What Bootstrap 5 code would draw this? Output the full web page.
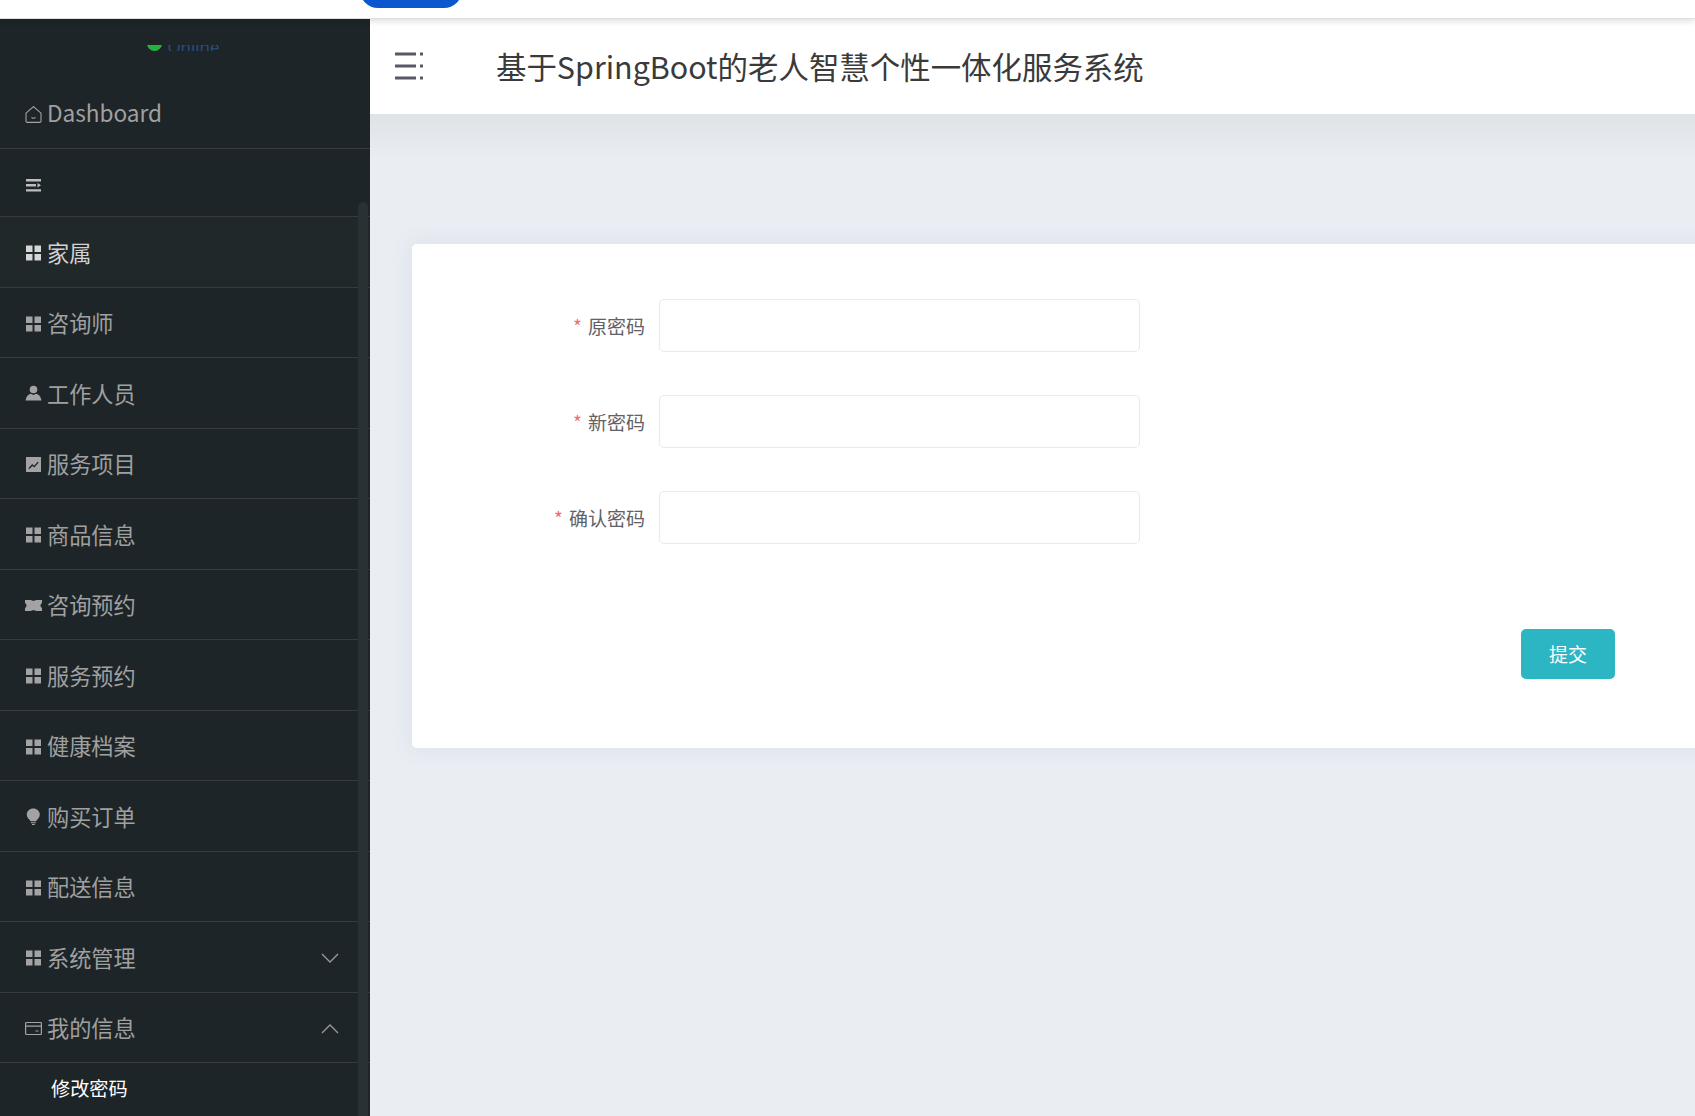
<!DOCTYPE html>
<html lang="zh-CN">
<head>
    <meta charset="UTF-8">
    <meta name="viewport" content="width=device-width, initial-scale=1.0">
    <title>修改密码</title>
    <link href="https://cdn.jsdelivr.net/npm/bootstrap@5.3.0/dist/css/bootstrap.min.css" rel="stylesheet">
    <style>
        html, body { height: 100%; }
        body { overflow: hidden; background: #eaedf2; font-family: "Noto Sans CJK SC", "Noto Sans", sans-serif; }
        .top-strip { height: 19px; background: #fff; border-bottom: 1px solid #e0e0e0; box-shadow: 0 2px 6px rgba(0,0,0,.14); position: relative; z-index: 5; flex: none; overflow: hidden; }
        .save-pill { width: 102px; height: 36px; margin: -28px 0 0 360px; background: #0b57d0; border-radius: 18px; }
        .side-panel { width: 370px; flex: none; background: #1d2528; position: relative; overflow: hidden; }
        .online-clip { height: 6px; margin: 26px 0 0; overflow: hidden; display: flex; align-items: flex-end; justify-content: center; padding-right: 3px; }
        .online-tag { display: flex; align-items: flex-end; gap: 5px; color: #27507f; font-size: 17px; line-height: 17px; font-family: "Open Sans", sans-serif; }
        .online-tag b { font-weight: 400; margin-bottom: -4px; }
        .online-dot { width: 15px; height: 15px; border-radius: 50%; background: #25b33c; display: block; }
        .side-menu .nav-link { display: flex; align-items: center; height: 70.5px; padding: 0 31px 0 25px; border-bottom: 1px solid #363b3d; color: #a0a0a0; font-size: 22.2px; line-height: 1; }
        .side-menu .row-dash { height: 98px; padding-top: 27px; font-size: 22.6px; }
        .side-menu .row-toggle { height: 68px; padding-top: 4px; }
        .side-menu .row-toggle .menu-glyph { color: #bdbdbd; }
        .side-menu .row-current { height: 70.5px; background: #20282a; color: #d2d2d2; }
        .side-menu .row-current .menu-glyph { color: #d6d6d6; }
        .menu-glyph { width: 17px; height: 17px; flex: none; margin: 2px 5px 0 0; color: #a3a3a3; }
        .menu-arrow { width: 18px; height: 18px; margin: 3px 0 0 auto; color: #9a9a9a; }
        .sub-link { display: block; padding: 12px 0 0 51px; color: #fff; font-size: 19.2px; line-height: 27px; }
        .side-track { position: absolute; top: 183px; bottom: 0; left: 358px; width: 10px; border-radius: 5px 5px 0 0; background: #2a3134; }
        .page-head { height: 95px; flex: none; padding: 0 0 3px 24px; background: #fff; position: relative; z-index: 2; }
        .head-glyph { width: 30px; height: 30px; margin-right: 72px; color: #5a5767; }
        .page-title { margin: 2px 0 0; color: #3a3a3a; font-size: 30.45px; font-weight: 400; line-height: 1; }
        .page-body { overflow: hidden; padding: 130px 0 0 42px; background: linear-gradient(#dfe2e7, #eaedf2 46px); }
        .pwd-card { width: 1320px; height: 504px; padding: 55px 117px 0 0; background: #fff; border-radius: 5px; box-shadow: 0 0 22px rgba(130,140,210,.14); }
        .pwd-row { height: 53px; margin-bottom: 43px; }
        .pwd-label { width: 247px; flex: none; margin: 0; padding-right: 14px; text-align: right; color: #606266; font-size: 19px; line-height: 1; }
        .pwd-label i { font-style: normal; color: #f56c6c; margin-right: 6px; }
        .pwd-input.form-control { width: 481px; height: 53px; border: 1.4px solid #e8e9ec; border-radius: 5px; box-shadow: none; }
        .pwd-save.btn { width: 94px; height: 50px; margin-top: 42px; padding: 0; background: #2cb5c2; border: 0; border-radius: 5px; color: #fff; font-size: 19px; }
    </style>
</head>
<body class="d-flex flex-column">
<svg width="0" height="0" class="position-absolute">
    <symbol id="ic-grid" viewBox="0 0 17 17"><path fill="currentColor" d="M1 1.500h6.500V8H1zM9.500 1.500H16V8H9.500zM1 10h6.500v6.500H1zM9.500 10H16v6.500H9.500z"/></symbol>
    <symbol id="ic-home" viewBox="0 0 17 17"><path fill="none" stroke="currentColor" stroke-width="1.100" d="M1 7.200 8.500.6 16 7.200v8a1.200 1.200 0 0 1-1.200 1.200H2.200A1.200 1.200 0 0 1 1 15.200z"/><path fill="none" stroke="currentColor" stroke-width="1.100" d="M6.600 11.200c.5 1.400 3.300 1.400 3.800 0"/></symbol>
    <symbol id="ic-lines" viewBox="0 0 17 17"><path fill="currentColor" d="M1 2h15v2.400H1zM1 7h10v2.400H1zM1 12.200h15v2.400H1zM12.500 6l3.500 2.200-3.500 2.200z"/></symbol>
    <symbol id="ic-user" viewBox="0 0 17 17"><circle fill="currentColor" cx="8.500" cy="4.500" r="3.800"/><path fill="currentColor" d="M5.800 8.800 8.500 10l2.700-1.200c2.700.6 4.500 2.800 5.300 6.700H.5C1.300 11.600 3.100 9.400 5.800 8.800z"/></symbol>
    <symbol id="ic-chart" viewBox="0 0 17 17"><path fill="currentColor" fill-rule="evenodd" d="M1 1h15v15H1zM3.400 12.300l1 .8 3-3.200 2 1.700 4.300-5-1-.8-3.500 4-2-1.700z"/></symbol>
    <symbol id="ic-ticket" viewBox="0 0 17 17"><path fill="currentColor" d="M0 3h6c.3 1 4.700 1 5 0h6v3.200c-2 .6-2 4 0 4.600V14h-6c-.3-1-4.700-1-5 0H0v-3.200c2-.6 2-4 0-4.600z"/></symbol>
    <symbol id="ic-bulb" viewBox="0 0 17 17"><path fill="currentColor" d="M8.300 .5c3.700 0 6.500 2.700 6.500 6 0 2.500-1.500 4-2.700 5.300-.5.5-.7 1-.8 1.500H5.400c-.1-.6-.4-1-.9-1.600C3.200 10.400 1.800 9 1.800 6.500c0-3.300 2.800-6 6.500-6zM5.900 14.300h4.900v1H5.900zM6.900 16h2.900v1H6.900z"/></symbol>
    <symbol id="ic-card" viewBox="0 0 17 17"><path fill="none" stroke="currentColor" stroke-width="1.200" d="M1.600 2.500h13.800a1 1 0 0 1 1 1v10a1 1 0 0 1-1 1H1.600a1 1 0 0 1-1-1v-10a1 1 0 0 1 1-1zM.6 6.200h15.800M10.500 11h3"/></symbol>
    <symbol id="ic-down" viewBox="0 0 18 18"><path fill="none" stroke="currentColor" stroke-width="1.300" d="M1 5l8 8 8-8"/></symbol>
    <symbol id="ic-up" viewBox="0 0 18 18"><path fill="none" stroke="currentColor" stroke-width="1.300" d="M1 13l8-8 8 8"/></symbol>
    <symbol id="ic-head" viewBox="0 0 30 30"><path fill="currentColor" d="M1 2.500h21v3H1zM26 2.500h3v3h-3zM1 14.500h21v3H1zM26 14.500h3v3h-3zM1 26.500h21v3H1zM26 26.500h3v3h-3z"/></symbol>
</svg>

<!-- browser strip at the top -->
<div class="top-strip"><div class="save-pill"></div></div>

<div class="d-flex flex-grow-1 overflow-hidden">
    <!-- Sidebar -->
    <aside class="side-panel">
        <div class="online-clip">
            <span class="online-tag"><span class="online-dot"></span><b>Online</b></span>
        </div>
        <ul class="nav flex-column side-menu">
            <li class="nav-item"><a class="nav-link row-dash" href="#"><svg class="menu-glyph"><use href="#ic-home"/></svg>Dashboard</a></li>
            <li class="nav-item"><a class="nav-link row-toggle" href="#"><svg class="menu-glyph"><use href="#ic-lines"/></svg></a></li>
            <li class="nav-item"><a class="nav-link row-current" href="#"><svg class="menu-glyph"><use href="#ic-grid"/></svg>家属</a></li>
            <li class="nav-item"><a class="nav-link" href="#"><svg class="menu-glyph"><use href="#ic-grid"/></svg>咨询师</a></li>
            <li class="nav-item"><a class="nav-link" href="#"><svg class="menu-glyph"><use href="#ic-user"/></svg>工作人员</a></li>
            <li class="nav-item"><a class="nav-link" href="#"><svg class="menu-glyph"><use href="#ic-chart"/></svg>服务项目</a></li>
            <li class="nav-item"><a class="nav-link" href="#"><svg class="menu-glyph"><use href="#ic-grid"/></svg>商品信息</a></li>
            <li class="nav-item"><a class="nav-link" href="#"><svg class="menu-glyph"><use href="#ic-ticket"/></svg>咨询预约</a></li>
            <li class="nav-item"><a class="nav-link" href="#"><svg class="menu-glyph"><use href="#ic-grid"/></svg>服务预约</a></li>
            <li class="nav-item"><a class="nav-link" href="#"><svg class="menu-glyph"><use href="#ic-grid"/></svg>健康档案</a></li>
            <li class="nav-item"><a class="nav-link" href="#"><svg class="menu-glyph"><use href="#ic-bulb"/></svg>购买订单</a></li>
            <li class="nav-item"><a class="nav-link" href="#"><svg class="menu-glyph"><use href="#ic-grid"/></svg>配送信息</a></li>
            <li class="nav-item"><a class="nav-link" href="#"><svg class="menu-glyph"><use href="#ic-grid"/></svg>系统管理<svg class="menu-arrow"><use href="#ic-down"/></svg></a></li>
            <li class="nav-item"><a class="nav-link" href="#"><svg class="menu-glyph"><use href="#ic-card"/></svg>我的信息<svg class="menu-arrow"><use href="#ic-up"/></svg></a></li>
            <li class="nav-item"><a class="sub-link text-decoration-none" href="#">修改密码</a></li>
        </ul>
        <div class="side-track"></div>
    </aside>

    <!-- Main Content -->
    <div class="d-flex flex-column flex-grow-1 overflow-hidden">
        <header class="page-head d-flex align-items-center">
            <svg class="head-glyph"><use href="#ic-head"/></svg>
            <h1 class="page-title">基于SpringBoot的老人智慧个性一体化服务系统</h1>
        </header>
        <main class="page-body flex-grow-1">
            <form class="pwd-card">
                <div class="pwd-row d-flex align-items-center">
                    <label class="pwd-label" for="old-pwd"><i>*</i>原密码</label>
                    <input type="password" class="form-control pwd-input" id="old-pwd">
                </div>
                <div class="pwd-row d-flex align-items-center">
                    <label class="pwd-label" for="new-pwd"><i>*</i>新密码</label>
                    <input type="password" class="form-control pwd-input" id="new-pwd">
                </div>
                <div class="pwd-row d-flex align-items-center">
                    <label class="pwd-label" for="re-pwd"><i>*</i>确认密码</label>
                    <input type="password" class="form-control pwd-input" id="re-pwd">
                </div>
                <div class="d-flex justify-content-end">
                    <button type="button" class="btn pwd-save">提交</button>
                </div>
            </form>
        </main>
    </div>
</div>

<script src="https://cdn.jsdelivr.net/npm/bootstrap@5.3.0/dist/js/bootstrap.bundle.min.js"></script>
</body>
</html>
